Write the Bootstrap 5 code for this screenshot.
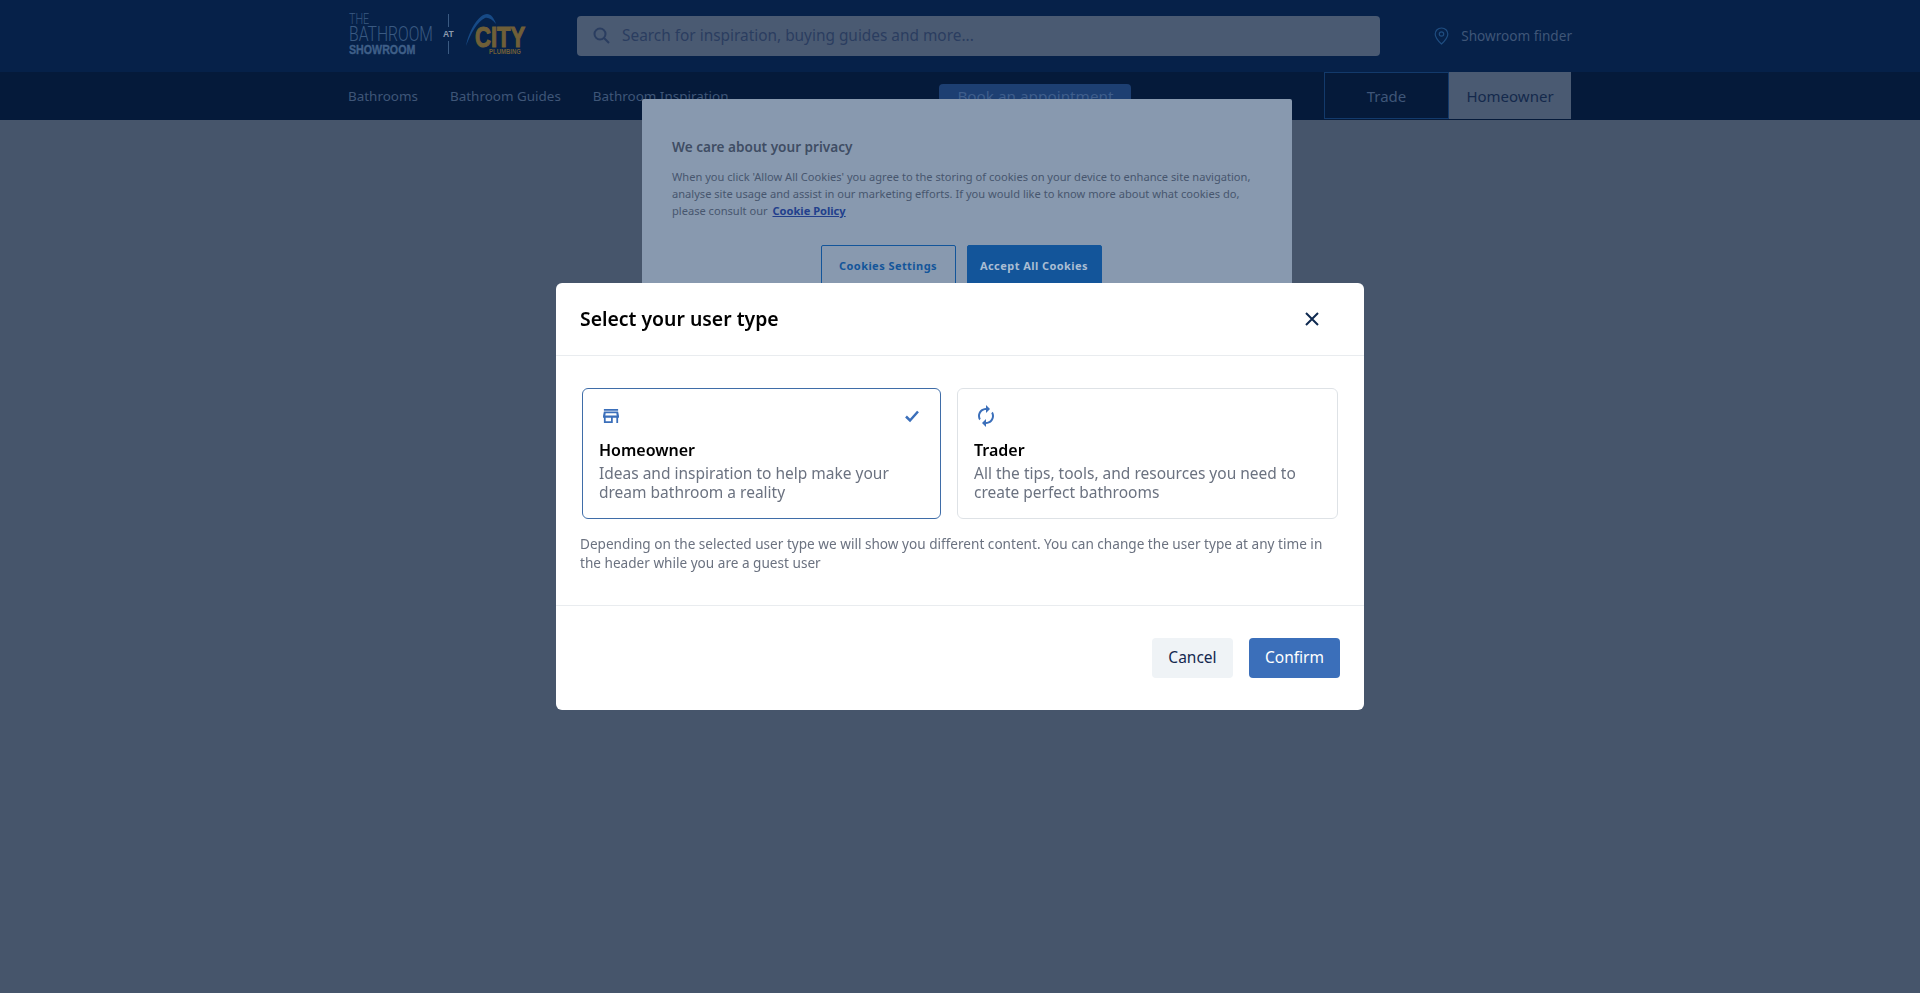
<!DOCTYPE html>
<html lang="en">
<head>
  <meta charset="UTF-8" />
  <meta name="viewport" content="width=device-width, initial-scale=1.0"/>
  <title>The Bathroom Showroom</title>
  <link href="https://cdn.jsdelivr.net/npm/bootstrap@5.3.0/dist/css/bootstrap.min.css" rel="stylesheet"/>
  <style>
    body {
      background-color: #46556b;
      font-family: "Noto Sans", sans-serif;
      height: 993px;
      overflow: hidden;
    }
    .page-wrap { width: 1224px; margin: 0 auto; }

    /* header, already dimmed by the modal backdrop */
    .top-bar { background: #062149; height: 72px; }
    .logo-box { width: 179px; height: 72px; flex: none; }
    .search-box {
      width: 803px; height: 40px; margin-left: 50px; padding-bottom: 1px;
      background: #4a5a72; border-radius: 4px;
      color: #2a3d60; font-size: 15.4px;
    }
    .search-box svg { margin: 0 12px 0 16px; }
    .finder-link { color: #3f5678; font-size: 13.6px; margin-left: auto; }
    .finder-link svg { margin-right: 12px; }

    .sub-bar { background: #051a3a; height: 48px; color: #3f5678; font-size: 13.45px; }
    .sub-bar .page-wrap { height: 48px; }
    .sub-link { margin-right: 32px; }
    .book-btn {
      width: 192px; height: 24px; margin-left: 179px;
      background: #1d3f72; border-radius: 4px; color: #3f5e8c; font-size: 15.3px;
    }
    .type-tabs { margin-left: auto; margin-right: 1px; height: 48px; }
    .type-tab { width: 125px; height: 47px; padding-top: 2px; font-size: 15px; border: 1px solid #133a6b; }
    .type-tab + .type-tab { width: 122px; }
    .type-tab.is-on { background: #4a5a72; color: #14294c; border-color: #4a5a72; }

    /* cookie banner behind the modal */
    .cookie-box {
      position: absolute; left: 642px; top: 99px; width: 650px; height: 320px;
      background: #8899af; border-radius: 2px; padding: 38px 30px; color: #47566e;
    }
    .cookie-title { font-size: 13.6px; font-weight: 600; color: #3f4d64; line-height: 20px; margin-bottom: 11px; }
    .cookie-text { font-size: 11.1px; line-height: 17px; white-space: nowrap; }
    .cookie-text a { color: #223f8c; font-weight: 700; margin-left: 2px; }
    .cookie-btns { margin-top: 26px; gap: 11px; padding-right: 12px; }
    .cookie-btn {
      width: 135px; height: 42px; border: 1px solid #13559a; border-radius: 2px;
      font-size: 11px; font-weight: 700; letter-spacing: .04em; color: #13559a;
    }
    .cookie-btn.is-solid { background: #13559a; color: #a9bdd3; }

    /* modal */
    .user-dialog { max-width: 808px; margin: 283px auto 0; }
    .user-dialog .modal-content { border: 0; border-radius: 6px; height: 427px; }
    .user-dialog .modal-header { height: 73px; padding: 0 24px; border-bottom: 1px solid #e9ecef; }
    .user-dialog .modal-title { font-size: 19.4px; font-weight: 600; color: #000; }
    .close-x { width: 56px; height: 40px; background: none; border: 0; padding: 0 0 4px; margin-left: auto; }
    .user-dialog .modal-body { padding: 32px 24px 0; flex: none; height: 249px; }
    .type-row { gap: 16px; margin: 0 2px; }
    .type-card {
      height: 131px; padding: 15px 16px; background: #fff;
      border: 1px solid #dee2e6; border-radius: 6px;
    }
    .type-card.is-on { border-color: #3f6da8; }
    .type-card.is-home { width: 359px; }
    .type-card.is-trade { width: 381px; }
    .type-name { font-size: 16px; font-weight: 600; color: #000; line-height: 24px; margin-top: 10px; }
    .type-desc { font-size: 15.5px; line-height: 19px; color: #6b7280; margin-top: 2px; }
    .type-note { font-size: 13.6px; line-height: 19px; color: #6b7280; margin: 15px 0 0; }
    .user-dialog .modal-footer { padding: 32px 24px; border-top: 1px solid #e9ecef; gap: 16px; }
    .user-dialog .modal-footer .btn { margin: 0; height: 40px; font-size: 15.5px; border-radius: 4px; padding: 0; border: 0; }
    .btn-cancel { width: 81px; background: #eff3f6; color: #14284f; }
    .btn-confirm { width: 91px; background: #3b6fba; color: #fff; }
  </style>
</head>
<body>

  <!-- Header -->
  <div class="top-bar">
    <div class="page-wrap d-flex align-items-center">
      <div class="logo-box">
        <svg width="179" height="72" viewBox="348 0 179 72">
          <g fill="#3a5a82" font-family="Roboto, sans-serif" font-weight="300">
            <text transform="translate(349 24) scale(.72 1)" font-size="15">THE</text>
            <text transform="translate(349 41) scale(.75 1)" font-size="21">BATHROOM</text>
          </g>
          <text transform="translate(349 54) scale(.79 1)" font-size="13.5" font-weight="700" fill="#3f5f88" stroke="#3f5f88" stroke-width=".4" font-family="Liberation Sans, sans-serif">SHOWROOM</text>
          <path d="M448.500 14v13M448.500 41v13" stroke="#3a5a82" fill="none"/>
          <text transform="translate(443 37) scale(.9 1)" font-size="9.500" font-weight="700" fill="#8c9aae" font-family="Liberation Sans, sans-serif">AT</text>
          <path d="M466 46C469 30 479 14 487 14C491 14 494 18 496 24C492 19 488 17 485 18C477 22 471 33 466 46Z" fill="#174a86"/>
          <text transform="translate(475 47) scale(.76 1)" font-size="29" font-weight="700" fill="#6f5f38" stroke="#6f5f38" stroke-width="1.200" font-family="Liberation Sans, sans-serif">CITY</text>
          <text transform="translate(489 54) scale(.8 1)" font-size="7.500" font-weight="700" fill="#6f5f38" font-family="Liberation Sans, sans-serif">PLUMBING</text>
        </svg>
      </div>
      <div class="search-box d-flex align-items-center">
        <svg width="17" height="17" viewBox="0 0 17 17" fill="none" stroke="#2a3d60" stroke-width="2"><circle cx="7" cy="7" r="5.500"/><path d="M11 11l5 5"/></svg>
        <span>Search for inspiration, buying guides and more...</span>
      </div>
      <div class="finder-link d-flex align-items-center">
        <svg width="15" height="18" viewBox="0 0 15 18" fill="none" stroke="#1f4d80" stroke-width="1.200"><path d="M7.500 1C3.900 1 1.200 3.700 1.200 7c0 3.600 3.400 7.400 6.300 10 2.900-2.600 6.300-6.400 6.300-10C13.800 3.700 11.100 1 7.500 1z"/><circle cx="7.500" cy="7" r="2.200"/></svg>
        <span>Showroom finder</span>
      </div>
    </div>
  </div>

  <div class="sub-bar">
    <div class="page-wrap d-flex align-items-center">
      <span class="sub-link">Bathrooms</span>
      <span class="sub-link">Bathroom Guides</span>
      <span class="sub-link">Bathroom Inspiration</span>
      <span class="book-btn d-flex align-items-center justify-content-center">Book an appointment</span>
      <div class="type-tabs d-flex">
        <span class="type-tab d-flex align-items-center justify-content-center">Trade</span>
        <span class="type-tab is-on d-flex align-items-center justify-content-center">Homeowner</span>
      </div>
    </div>
  </div>

  <!-- Cookie banner -->
  <div class="cookie-box">
    <div class="cookie-title">We care about your privacy</div>
    <div class="cookie-text">
      When you click 'Allow All Cookies' you agree to the storing of cookies on your device to enhance site navigation,<br>
      analyse site usage and assist in our marketing efforts. If you would like to know more about what cookies do,<br>
      please consult our <a href="#">Cookie Policy</a>
    </div>
    <div class="cookie-btns d-flex justify-content-center">
      <span class="cookie-btn d-flex align-items-center justify-content-center">Cookies Settings</span>
      <span class="cookie-btn is-solid d-flex align-items-center justify-content-center">Accept All Cookies</span>
    </div>
  </div>

  <!-- User type modal -->
  <div class="modal d-block" tabindex="-1">
    <div class="modal-dialog user-dialog">
      <div class="modal-content">
        <div class="modal-header">
          <h5 class="modal-title">Select your user type</h5>
          <button class="close-x" type="button" aria-label="Close">
            <svg width="14" height="14" viewBox="0 0 14 14" fill="none" stroke="#0f2a50" stroke-width="2"><path d="M1 1l12 12M13 1L1 13"/></svg>
          </button>
        </div>
        <div class="modal-body">
          <div class="type-row d-flex">
            <div class="type-card is-home is-on">
              <div class="d-flex justify-content-between align-items-center">
                <svg width="24" height="24" viewBox="-1.500 -1.500 27 27" fill="#3b6fba" fill-rule="evenodd"><path d="M20 4H4v2h16V4zm1 10v-2l-1-5H4l-1 5v2h1v6h10v-6h4v6h2v-6h1zm-9 4H6v-4h6v4zM6 9h12l.4 2.500H5.600z"/></svg>
                <svg width="24" height="24" viewBox="0 0 24 24" fill="none" stroke="#3b6fba" stroke-width="2.500"><path d="M6 12.500l4 4 8-9"/></svg>
              </div>
              <div class="type-name">Homeowner</div>
              <div class="type-desc">Ideas and inspiration to help make your<br>dream bathroom a reality</div>
            </div>
            <div class="type-card is-trade">
              <svg class="d-block" width="24" height="24" viewBox="0 0 24 24" fill="#3b6fba"><path transform="matrix(-1 0 0 1 24 0)" d="M12 4V1L8 5l4 4V6c3.310 0 6 2.690 6 6 0 1.010-.25 1.970-.7 2.800l1.460 1.460C19.540 15.030 20 13.570 20 12c0-4.420-3.580-8-8-8zm0 14c-3.310 0-6-2.690-6-6 0-1.010.25-1.970.7-2.800L5.240 7.740C4.460 8.970 4 10.430 4 12c0 4.420 3.580 8 8 8v3l4-4-4-4v3z"/></svg>
              <div class="type-name">Trader</div>
              <div class="type-desc">All the tips, tools, and resources you need to<br>create perfect bathrooms</div>
            </div>
          </div>
          <p class="type-note">Depending on the selected user type we will show you different content. You can change the user type at any time in<br>the header while you are a guest user</p>
        </div>
        <div class="modal-footer">
          <button class="btn btn-cancel" type="button">Cancel</button>
          <button class="btn btn-confirm" type="button">Confirm</button>
        </div>
      </div>
    </div>
  </div>

  <script src="https://cdn.jsdelivr.net/npm/bootstrap@5.3.0/dist/js/bootstrap.bundle.min.js"></script>
</body>
</html>
